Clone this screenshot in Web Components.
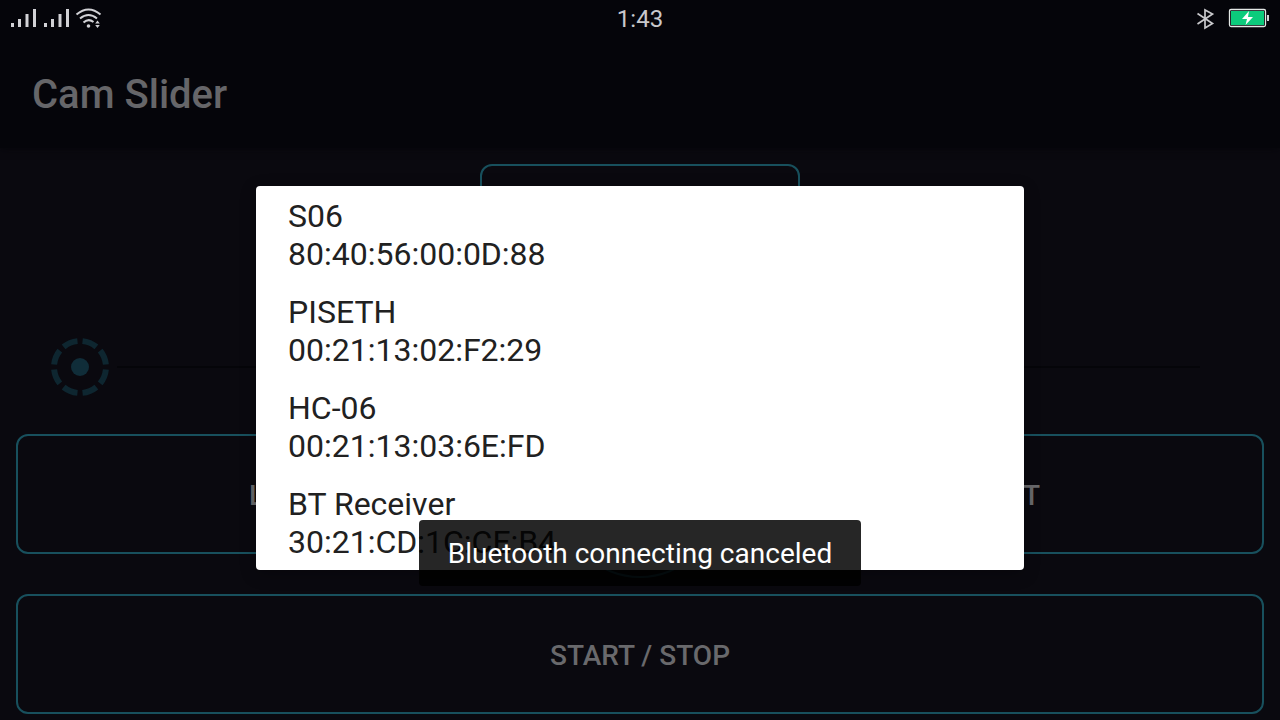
<!DOCTYPE html>
<html lang="en">
<head>
<meta charset="utf-8">
<meta name="viewport" content="width=device-width, initial-scale=1">
<title>Cam Slider</title>
<style>
html, body { margin: 0; min-height: 100%; background: #0a090f; }
body { font-family: Roboto, "Liberation Sans", sans-serif; overflow: hidden; }
</style>
</head>
<body>
<cam-app></cam-app>
<script>
const define = (name, html) => customElements.define(name, class extends HTMLElement {
  constructor() {
    super();
    const t = document.createElement('template');
    t.innerHTML = html;
    this.attachShadow({ mode: 'open' }).append(t.content.cloneNode(true));
  }
});

define('status-bar', `
<style>
:host { display: grid; grid-template-columns: 1fr auto 1fr; align-items: center; height: 36px; padding: 0 8px; color: #c9c9cc; font-size: 24px; line-height: 36px; }
svg { display: block; }
.end { justify-self: end; display: flex; align-items: center; gap: 12px; }
time { padding-top: 1px; height: 35px; }
</style>
<svg width="96" height="36" viewBox="8 1 96 36" fill="#d2d2d6" aria-label="Signal">
  <path d="M11 24h3v4h-3zM18 20h3v8h-3zM25.500 15h3v13h-3zM33 10h3v18h-3zM44 24h3v4h-3zM51 20h3v8h-3zM58.500 15h3v13h-3zM66 10h3v18h-3z"/>
  <g fill="none" stroke="#d2d2d6" stroke-width="2">
    <path d="M76.500 15.500Q88.500 5.500 100.500 15.500M80 19.500Q88.500 12.500 97 19.500M83.500 23.500Q88.500 19 93.500 23"/>
  </g>
  <circle cx="88.500" cy="27" r="1.800"/>
  <path d="M95.200 24.500L97.500 21.500L99.800 24.500zM95.200 26L99.800 26L97.500 29z"/>
</svg>
<time>1:43</time>
<div class="end">
  <svg width="20" height="36" viewBox="1196 0 20 36" fill="none" stroke="#c9c9cc" stroke-width="1.700" aria-label="Bluetooth">
    <path d="M1197.500 13.500L1212.500 23.500L1205 28V10L1212.500 14L1197.500 24"/>
  </svg>
  <svg width="44" height="36" viewBox="1228 0 44 36" aria-label="Battery charging">
    <rect x="1229.500" y="9.500" width="36" height="17" rx="1.500" fill="none" stroke="#e4e8e6" stroke-width="1.300"/>
    <rect x="1231" y="11" width="33" height="14" fill="#0ccb7c"/>
    <rect x="1267" y="15" width="2" height="6" fill="#d2d2d6"/>
    <path d="M1249 11L1242 19H1247L1245.500 25L1253 17H1248z" fill="#fff"/>
  </svg>
</div>`);

define('app-bar', `
<style>
:host { display: flex; align-items: center; height: 112px; padding: 0 32px; }
h1 { margin: 0; padding-top: 6px; font-size: 40px; line-height: 48px; font-weight: 500; color: #666669; }
</style>
<h1><slot></slot></h1>`);

define('outline-button', `
<style>
:host { display: block; height: 120px; }
button { display: flex; align-items: center; justify-content: center; box-sizing: border-box; width: 100%; height: 100%; margin: 0; padding: 4px 0 0; border: 2px solid #18505d; border-radius: 12px; background: transparent; color: #69696c; font: 500 28px/32px Roboto, "Liberation Sans", sans-serif; text-transform: uppercase; }
span { min-width: var(--label-width, 0); text-align: var(--label-align, center); }
</style>
<button type="button"><span><slot></slot></span></button>`);

define('track-slider', `
<style>
:host { display: flex; align-items: center; height: 62px; padding: 0 64px 0 33px; position: relative; }
svg { display: block; flex: none; }
.line { flex: 1; height: 2px; margin-left: 6px; background: #050509; }
input { position: absolute; inset: 0; width: 100%; height: 100%; margin: 0; opacity: 0; }
</style>
<svg width="62" height="62" viewBox="-31 -31 62 62">
  <circle r="9" fill="#102d39"/>
  <circle r="26" fill="none" stroke="#0e2630" stroke-width="6" pathLength="80" stroke-dasharray="7.400 2.600" stroke-dashoffset="-1.300"/>
</svg>
<div class="line"></div>
<input type="range" min="0" max="100" value="0" aria-label="Position">`);

define('device-item', `
<style>
:host { display: block; }
button { display: block; box-sizing: border-box; width: 100%; height: 96px; margin: 0; padding: 2px 32px 0; border: 0; background: none; text-align: left; color: #212121; font: 400 32px/38px Roboto, "Liberation Sans", sans-serif; }
span { display: block; }
</style>
<button type="button"><span><slot name="name"></slot></span><span><slot></slot></span></button>`);

define('device-dialog', `
<style>
:host { position: absolute; inset: 36px 0 0; display: flex; align-items: center; justify-content: center; }
section { width: 60%; border-radius: 4px; overflow: hidden; background: #fff; box-shadow: 0 4px 16px rgba(0, 0, 0, .25); }
</style>
<section role="dialog" aria-modal="true" aria-label="Paired devices"><slot></slot></section>`);

define('toast-message', `
<style>
:host { position: absolute; left: 0; right: 0; bottom: 134px; display: flex; justify-content: center; pointer-events: none; }
p { margin: 0; padding: 18px 29px 16px; border-radius: 4px; background: rgba(0, 0, 0, .85); color: #fff; font-size: 28px; line-height: 32px; }
</style>
<p role="status"><slot></slot></p>`);

define('cam-app', `
<style>
:host { display: block; position: relative; min-height: 100vh; background: #0a090f; }
header { background: #05050a; box-shadow: 0 0 8px #05050a; }
main { display: flex; flex-direction: column; padding: 16px 16px 6px; }
.connect { width: 320px; align-self: center; }
track-slider { margin: 52px 0 36px; }
.ends { display: grid; grid-template-columns: 1fr 1fr; position: relative; margin-bottom: 40px; gap: 16px; }
.left { --label-width: 150px; --label-align: left; }
.right { --label-width: 168px; --label-align: right; }
.dial { position: absolute; left: 50%; bottom: -24px; width: 160px; height: 160px; margin-left: -80px; box-sizing: border-box; border: 2px solid #18505d; border-radius: 50%; }
</style>
<header>
  <status-bar></status-bar>
  <app-bar>Cam Slider</app-bar>
</header>
<main>
  <outline-button class="connect"></outline-button>
  <track-slider></track-slider>
  <div class="ends">
    <outline-button class="left">L</outline-button>
    <outline-button class="right">T</outline-button>
    <div class="dial"></div>
  </div>
  <outline-button>Start / Stop</outline-button>
</main>
<device-dialog>
  <device-item><span slot="name">S06</span>80:40:56:00:0D:88</device-item>
  <device-item><span slot="name">PISETH</span>00:21:13:02:F2:29</device-item>
  <device-item><span slot="name">HC-06</span>00:21:13:03:6E:FD</device-item>
  <device-item><span slot="name">BT Receiver</span>30:21:CD:1C:CE:B4</device-item>
</device-dialog>
<toast-message>Bluetooth connecting canceled</toast-message>`);
</script>
</body>
</html>
